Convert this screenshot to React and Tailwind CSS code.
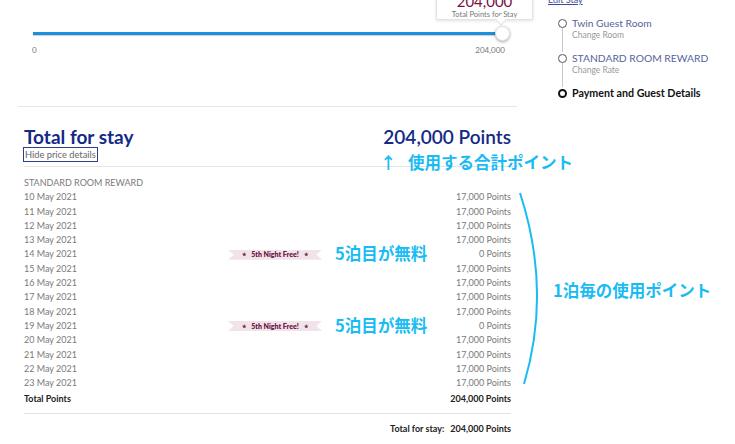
import React from 'react'

const nights = [
  { date: '10 May 2021', pts: '17,000 Points' },
  { date: '11 May 2021', pts: '17,000 Points' },
  { date: '12 May 2021', pts: '17,000 Points' },
  { date: '13 May 2021', pts: '17,000 Points' },
  { date: '14 May 2021', pts: '0 Points', free: true },
  { date: '15 May 2021', pts: '17,000 Points' },
  { date: '16 May 2021', pts: '17,000 Points' },
  { date: '17 May 2021', pts: '17,000 Points' },
  { date: '18 May 2021', pts: '17,000 Points' },
  { date: '19 May 2021', pts: '0 Points', free: true },
  { date: '20 May 2021', pts: '17,000 Points' },
  { date: '21 May 2021', pts: '17,000 Points' },
  { date: '22 May 2021', pts: '17,000 Points' },
  { date: '23 May 2021', pts: '17,000 Points' },
]

const steps = [
  { title: 'Twin Guest Room', sub: 'Change Room' },
  { title: 'STANDARD ROOM REWARD', sub: 'Change Rate' },
]

// 5泊目無料のリボン
function Ribbon() {
  return (
    <div className="w-[94px] h-[10px] bg-[#f1e3ea] flex items-center justify-center gap-[5px] text-[7px] font-extrabold text-[#6e1845] leading-none [clip-path:polygon(0_0,100%_0,94%_50%,100%_100%,0_100%,6%_50%)]">
      <span className="text-[5px]">★</span>
      <span>5th Night Free!</span>
      <span className="text-[5px]">★</span>
    </div>
  )
}

export default function App() {
  const jp = "font-['Noto_Sans_CJK_JP',sans-serif] font-bold text-[#19bcf2] text-[16.5px] leading-none whitespace-nowrap"

  return (
    <div className="relative w-[735px] h-[444px] overflow-hidden bg-white font-['Lato','Noto_Sans',sans-serif]">
      <div className="flex">
        {/* 左カラム */}
        <div className="ml-[18px] w-[499px]">
          {/* スライダー */}
          <div className="relative h-[107px] pt-[26px] border-b border-[#e6e6e6]">
            <div className="ml-[15px] w-[477px] flex items-center">
              <div className="flex-1 h-[3px] bg-[#1b8fe0] shadow-[0_1px_1px_rgba(0,0,0,0.2)]" />
              <div className="w-[15px] h-[15px] -ml-[1px] rounded-full bg-white border border-[#e2e2e2] shadow-[0_1px_3px_rgba(0,0,0,0.35)]" />
            </div>
            <div className="ml-[14px] w-[473px] mt-[4px] flex justify-between text-[8px] leading-[10px] text-[#777]">
              <span>0</span>
              <span>204,000</span>
            </div>

            {/* ツールチップ */}
            <div className="absolute left-[418px] top-[-12px] w-[97px] h-[32px] bg-white border border-[#e3e3e3] shadow-[0_1px_3px_rgba(0,0,0,0.12)] flex flex-col items-center">
              <span className="text-[15px] leading-[15px] text-[#7a1040] mt-[5px]">204,000</span>
              <span className="text-[7.5px] leading-[9px] text-[#777] mt-[1px]">Total Points for Stay</span>
              <div className="absolute left-[60px] bottom-[-5px] w-[8px] h-[8px] bg-white border-r border-b border-[#e3e3e3] rotate-45" />
            </div>
          </div>

          {/* 料金詳細 */}
          <div className="ml-[6px] w-[487px] pt-[20px]">
            <div className="flex justify-between items-center h-[20px] text-[19px] leading-[20px] text-[#142a86]">
              <span className="font-bold">Total for stay</span>
              <span className="font-semibold">204,000 Points</span>
            </div>
            <div className="-ml-[1px] w-fit border border-[#2b3d8f] px-[1px] h-[15px] text-[9.3px] leading-[13px] text-[#666]">
              Hide price details
            </div>
            <div className="mt-[4px] border-t border-[#e3e3e3] w-[493px]" />

            <div className="mt-[9px] text-[9px] text-[#7a7a7a]">
              <div className="h-[14.3px] leading-[14.3px]">STANDARD ROOM REWARD</div>
              {nights.map((n) => (
                <div key={n.date} className="h-[14.3px] flex items-center leading-[14.3px]">
                  <span className="w-[204px]">{n.date}</span>
                  {n.free && <Ribbon />}
                  <span className="ml-auto">{n.pts}</span>
                </div>
              ))}
              <div className="mt-[1px] h-[14px] flex items-center justify-between font-bold text-[#222]">
                <span>Total Points</span>
                <span>204,000 Points</span>
              </div>
            </div>
            <div className="mt-[8px] border-t border-[#e3e3e3]" />
            <div className="mt-[7px] h-[14px] flex items-center justify-end gap-[6px] text-[9px] font-bold text-[#222]">
              <span>Total for stay:</span>
              <span>204,000 Points</span>
            </div>
          </div>
        </div>

        {/* 右カラム */}
        <div className="ml-[31px]">
          <div className="-mt-[5px] h-[10px] text-[9px] leading-[10px] text-[#3b4c9a] underline">Edit Stay</div>
          <div className="mt-[12px] ml-[9px]">
            {steps.map((s) => (
              <div key={s.title} className="flex h-[35px]">
                <div className="w-[11px] flex flex-col items-center">
                  <div className="mt-[2px] w-[9px] h-[9px] rounded-full border-[1.5px] border-[#555] bg-white" />
                  <div className="w-px flex-1 bg-[#c8c8c8]" />
                </div>
                <div className="ml-[4px]">
                  <div className="text-[10.3px] leading-[12px] text-[#56639b]">{s.title}</div>
                  <div className="mt-[1px] text-[8.5px] leading-[10px] text-[#9a9a9a]">{s.sub}</div>
                </div>
              </div>
            ))}
            <div className="flex">
              <div className="w-[11px] flex flex-col items-center">
                <div className="mt-[2px] w-[9px] h-[9px] rounded-full border-2 border-[#111] bg-white" />
              </div>
              <div className="ml-[4px] text-[10.7px] leading-[12px] font-bold text-[#111]">Payment and Guest Details</div>
            </div>
          </div>
        </div>
      </div>

      {/* 注釈 */}
      <div className={`absolute left-[380px] top-[154px] flex ${jp}`}>
        <span className="w-[28px]">↑</span>
        <span>使用する合計ポイント</span>
      </div>
      <div className={`absolute left-[335px] top-[245px] ${jp}`}>5泊目が無料</div>
      <div className={`absolute left-[335px] top-[317px] ${jp}`}>5泊目が無料</div>
      <div className={`absolute left-[553px] top-[282px] ${jp}`}>1泊毎の使用ポイント</div>
      <svg className="absolute left-0 top-0" width="735" height="444" fill="none">
        <path d="M520 193 Q552 291 524 384" stroke="#19bcf2" strokeWidth="2" />
      </svg>
    </div>
  )
}
